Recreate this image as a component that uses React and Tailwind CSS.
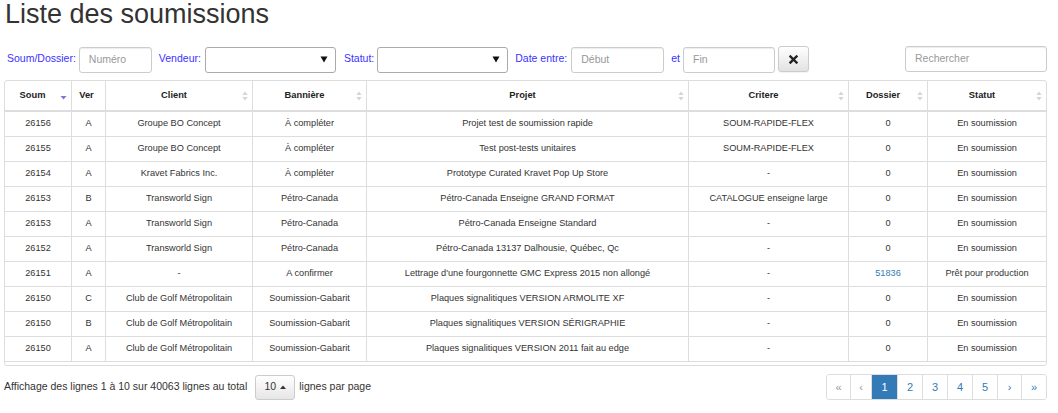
import React from "react";

const rows = [
  ["26156", "A", "Groupe BO Concept", "À compléter", "Projet test de soumission rapide", "SOUM-RAPIDE-FLEX", "0", "En soumission"],
  ["26155", "A", "Groupe BO Concept", "À compléter", "Test post-tests unitaires", "SOUM-RAPIDE-FLEX", "0", "En soumission"],
  ["26154", "A", "Kravet Fabrics Inc.", "À compléter", "Prototype Curated Kravet Pop Up Store", "-", "0", "En soumission"],
  ["26153", "B", "Transworld Sign", "Pétro-Canada", "Pétro-Canada Enseigne GRAND FORMAT", "CATALOGUE enseigne large", "0", "En soumission"],
  ["26153", "A", "Transworld Sign", "Pétro-Canada", "Pétro-Canada Enseigne Standard", "-", "0", "En soumission"],
  ["26152", "A", "Transworld Sign", "Pétro-Canada", "Pétro-Canada 13137 Dalhousie, Québec, Qc", "-", "0", "En soumission"],
  ["26151", "A", "-", "A confirmer", "Lettrage d'une fourgonnette GMC Express 2015 non allongé", "-", "51836", "Prêt pour production"],
  ["26150", "C", "Club de Golf Métropolitain", "Soumission-Gabarit", "Plaques signalitiques VERSION ARMOLITE XF", "-", "0", "En soumission"],
  ["26150", "B", "Club de Golf Métropolitain", "Soumission-Gabarit", "Plaques signalitiques VERSION SÉRIGRAPHIE", "-", "0", "En soumission"],
  ["26150", "A", "Club de Golf Métropolitain", "Soumission-Gabarit", "Plaques signalitiques VERSION 2011 fait au edge", "-", "0", "En soumission"],
];

const headers = [
  { t: "Soum", icon: "desc" },
  { t: "Ver", icon: null },
  { t: "Client", icon: "both" },
  { t: "Bannière", icon: "both" },
  { t: "Projet", icon: "both" },
  { t: "Critere", icon: "both" },
  { t: "Dossier", icon: "both" },
  { t: "Statut", icon: "both" },
];

const cols = "grid grid-cols-[66px_34px_147px_114px_322px_160px_79px_1fr]";

function SortBoth() {
  return (
    <svg width="6" height="10" viewBox="0 0 6 10" className="shrink-0">
      <path d="M3 0.5 L5.6 4 L0.4 4 Z" fill="#d4d4d4" />
      <path d="M3 9.5 L5.6 6 L0.4 6 Z" fill="#d4d4d4" />
    </svg>
  );
}

function SortDesc() {
  return (
    <svg width="7" height="10" viewBox="0 0 7 10" className="shrink-0">
      <path d="M0.5 5 L6.5 5 L3.5 8.5 Z" fill="#7a7ad8" />
    </svg>
  );
}

function SelectArrow() {
  return (
    <svg width="8" height="7" viewBox="0 0 8 7">
      <path d="M0.5 0.5 L7.5 0.5 L4 6.5 Z" fill="#111" />
    </svg>
  );
}

function Label({ children, className = "" }) {
  return <span className={"text-[10.5px] text-[#3a32ff] " + className}>{children}</span>;
}

function TextInput({ w, ph, className = "" }) {
  return (
    <div
      className={
        "h-[26px] border border-[#ccc] rounded-[3px] bg-white flex items-center pl-[9px] text-[10.5px] text-[#999] shadow-[inset_0_1px_1px_rgba(0,0,0,0.075)] " +
        w +
        " " +
        className
      }
    >
      {ph}
    </div>
  );
}

function Select({ className = "" }) {
  return (
    <div
      className={
        "h-[26px] w-[131px] border border-[#aaa] rounded-[3px] bg-white flex items-center justify-end pr-[7px] " + className
      }
    >
      <SelectArrow />
    </div>
  );
}

export default function App() {
  return (
    <div className="w-[1058px] h-[413px] bg-white pl-[4px] pr-[11px] font-['Liberation_Sans',Arial,sans-serif] text-[#333]">
      <h1 className="text-[27px] leading-[26px] font-normal text-[#333] pl-[1px] pt-[1px]">Liste des soumissions</h1>

      {/* Filters */}
      <div className="flex items-center h-[28px] mt-[18px]">
        <Label className="ml-[3px]">Soum/Dossier:</Label>
        <TextInput w="w-[73px]" ph="Numéro" className="ml-[3px] mt-[1px]" />
        <Label className="ml-[7px]">Vendeur:</Label>
        <Select className="ml-[4px] mt-[1px]" />
        <Label className="ml-[8px]">Statut:</Label>
        <Select className="ml-[3px] mt-[1px]" />
        <Label className="ml-[7px]">Date entre:</Label>
        <TextInput w="w-[93px]" ph="Début" className="ml-[4px] mt-[1px]" />
        <Label className="ml-[7px]">et</Label>
        <TextInput w="w-[92px]" ph="Fin" className="ml-[3px] mt-[1px]" />
        <button className="ml-[3px] h-[26px] w-[31px] border border-[#ccc] rounded-[3px] bg-gradient-to-b from-white to-[#e2e2e2] flex items-center justify-center shadow-[0_1px_1px_rgba(0,0,0,0.05)]">
          <svg width="9" height="9" viewBox="0 0 9 9">
            <path d="M1.5 1.5 L7.5 7.5 M7.5 1.5 L1.5 7.5" stroke="#222" strokeWidth="2.4" strokeLinecap="square" />
          </svg>
        </button>
        <TextInput w="w-[142px]" ph="Rechercher" className="ml-auto" />
      </div>

      {/* Table */}
      <div className="mt-[7px] border border-[#ddd] rounded-[3px] pb-[3px]">
        <div className={cols + " h-[31px] border-b-2 border-[#ddd] text-[9.3px] font-bold text-[#222]"}>
          {headers.map((h, i) => (
            <div key={i} className={"flex items-center pr-[4px] " + (i > 0 ? "border-l border-[#ddd]" : "")}>
              <span className="flex-1 text-center">{h.t}</span>
              {h.icon === "both" && <SortBoth />}
              {h.icon === "desc" && <SortDesc />}
            </div>
          ))}
        </div>
        {rows.map((r, ri) => (
          <div key={ri} className={cols + " h-[25px] border-b border-[#ddd] text-[9.2px] text-[#333]"}>
            {r.map((c, ci) => (
              <div
                key={ci}
                className={
                  "flex items-center justify-center whitespace-nowrap overflow-hidden " +
                  (ci > 0 ? "border-l border-[#ddd] " : "") +
                  (ci === 6 && c !== "0" ? "text-[#337ab7]" : "")
                }
              >
                {c}
              </div>
            ))}
          </div>
        ))}
      </div>

      {/* Footer */}
      <div className="flex items-center mt-[8px] h-[26px]">
        <span className="text-[10.5px] text-[#333]">Affichage des lignes 1 à 10 sur 40063 lignes au total</span>
        <button className="ml-[8px] h-[25px] w-[40px] border border-[#ccc] rounded-[3px] bg-gradient-to-b from-white to-[#e6e6e6] flex items-center justify-center gap-[4px] text-[10.5px] text-[#333]">
          <span>10</span>
          <svg width="6" height="4" viewBox="0 0 6 4">
            <path d="M0 4 L6 4 L3 0.5 Z" fill="#333" />
          </svg>
        </button>
        <span className="ml-[4px] text-[10.5px] text-[#333]">lignes par page</span>

        <div className="ml-auto flex h-[26px] text-[11px] border border-[#ddd] rounded-[3px] overflow-hidden">
          {[
            { t: "«", w: "w-[23px]", dis: true },
            { t: "‹", w: "w-[21px]", dis: true },
            { t: "1", w: "w-[26px]", active: true },
            { t: "2", w: "w-[25px]" },
            { t: "3", w: "w-[25px]" },
            { t: "4", w: "w-[25px]" },
            { t: "5", w: "w-[25px]" },
            { t: "›", w: "w-[24px]" },
            { t: "»", w: "w-[25px]" },
          ].map((p, i) => (
            <div
              key={i}
              className={
                "flex items-center justify-center " +
                p.w +
                " " +
                (i > 0 ? "border-l border-[#ddd] " : "") +
                (p.active ? "bg-[#337ab7] text-white border-[#337ab7]" : p.dis ? "text-[#999] bg-white" : "text-[#337ab7] bg-white")
              }
            >
              {p.t}
            </div>
          ))}
        </div>
      </div>
    </div>
  );
}
